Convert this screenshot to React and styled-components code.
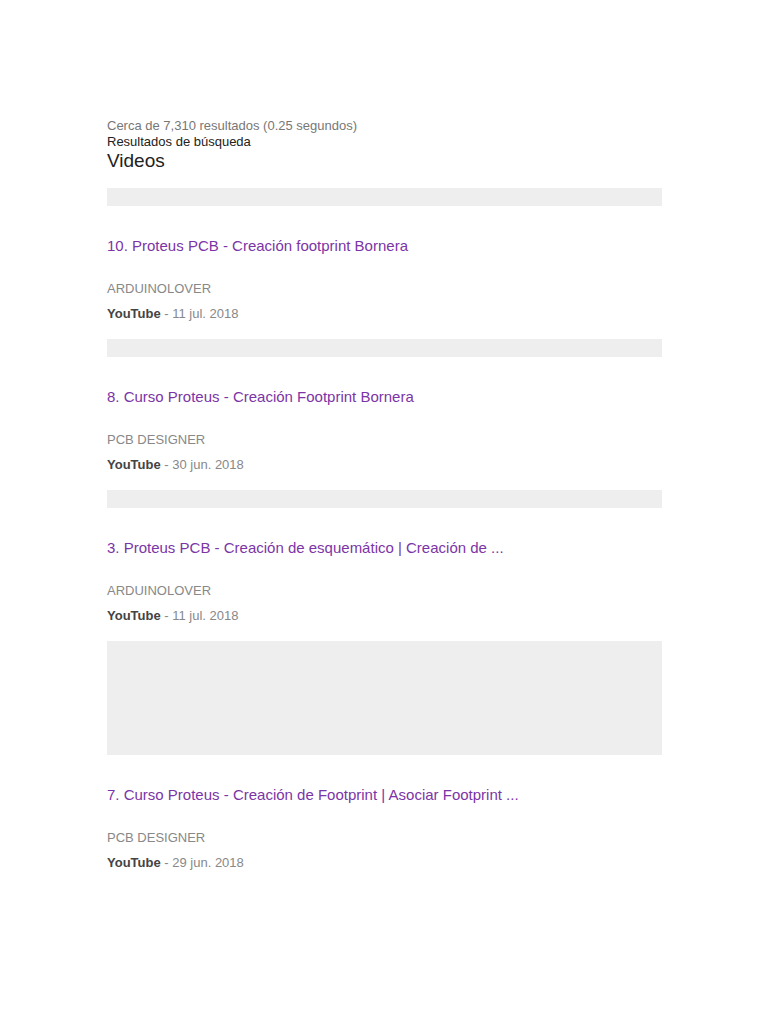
import React from 'react';
import styled, { createGlobalStyle } from 'styled-components';

const GlobalStyle = createGlobalStyle`
  body {
    margin: 0;
    background: #fff;
    font-family: "Liberation Sans", Arial, sans-serif;
  }
`;

const Page = styled.div`
  width: 555px;
  margin: 0 0 0 107px;
  padding-top: 118px;
`;

const Stats = styled.div`
  font-size: 13px;
  line-height: 16px;
  color: #777;
`;

const Label = styled.div`
  font-size: 13px;
  line-height: 15px;
  color: #222;
`;

const Heading = styled.h2`
  margin: 0;
  font-size: 19px;
  font-weight: normal;
  line-height: 24px;
  color: #222;
`;

const List = styled.div`
  margin-top: 15px;
  display: flex;
  flex-direction: column;
`;

const Item = styled.div`
  display: flex;
  flex-direction: column;
  padding-bottom: ${p => (p.$last ? 0 : 15)}px;
`;

const Thumb = styled.div`
  height: ${p => p.$h}px;
  background: #eeeeee;
`;

const Title = styled.a`
  display: block;
  margin-top: 30px;
  font-size: 15px;
  line-height: 20px;
  color: #7b35a6;
  text-decoration: none;
  white-space: nowrap;
`;

const Channel = styled.div`
  margin-top: 23px;
  font-size: 13px;
  line-height: 20px;
  color: #888;
`;

const Meta = styled.div`
  margin-top: 5px;
  font-size: 13px;
  line-height: 20px;
  color: #888;

  b {
    color: #444;
  }
`;

const videos = [
  { title: '10. Proteus PCB - Creación footprint Bornera', channel: 'ARDUINOLOVER', date: '11 jul. 2018', h: 18 },
  { title: '8. Curso Proteus - Creación Footprint Bornera', channel: 'PCB DESIGNER', date: '30 jun. 2018', h: 18 },
  { title: '3. Proteus PCB - Creación de esquemático | Creación de ...', channel: 'ARDUINOLOVER', date: '11 jul. 2018', h: 18 },
  { title: '7. Curso Proteus - Creación de Footprint | Asociar Footprint ...', channel: 'PCB DESIGNER', date: '29 jun. 2018', h: 114 },
];

export default function App() {
  return (
    <>
      <GlobalStyle />
      <Page>
        <Stats>Cerca de 7,310 resultados (0.25 segundos)</Stats>
        <Label>Resultados de búsqueda</Label>
        <Heading>Videos</Heading>
        <List>
          {videos.map((v, i) => (
            <Item key={v.title} $last={i === videos.length - 1}>
              <Thumb $h={v.h} />
              <Title href="#">{v.title}</Title>
              <Channel>{v.channel}</Channel>
              <Meta><b>YouTube</b> - {v.date}</Meta>
            </Item>
          ))}
        </List>
      </Page>
    </>
  );
}
